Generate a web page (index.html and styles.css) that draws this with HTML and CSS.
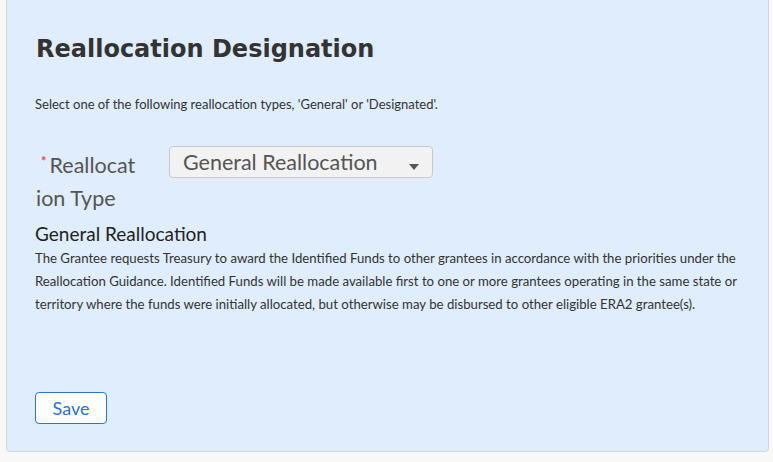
FILE: index.html
```html
<!DOCTYPE html>
<html lang="en">

<head>
    <meta charset="UTF-8">
    <meta name="viewport" content="width=device-width, initial-scale=1.0">
    <title>Reallocation Designation</title>
    <link rel="stylesheet" href="styles.css">
</head>

<body>
    <div class="panel">
        <h2>Reallocation Designation</h2>

        <p class="intro">Select one of the following reallocation types, 'General' or 'Designated'.</p>

        <div class="field">
            <label for="reallocType"><span class="req">*</span>Reallocation Type</label>
            <div class="select-box">
                <span class="select-value">General Reallocation</span>
                <span class="caret"></span>
            </div>
        </div>

        <div class="type-info">
            <h3>General Reallocation</h3>
            <p>The Grantee requests Treasury to award the Identified Funds to other grantees in accordance with the priorities under the Reallocation Guidance. Identified Funds will be made available first to one or more grantees operating in the same state or territory where the funds were initially allocated, but otherwise may be disbursed to other eligible ERA2 grantee(s).</p>
        </div>

        <button type="button" class="save-btn">Save</button>
    </div>
</body>

</html>
```

FILE: styles.css
```css
body {
    font-family: Lato, 'Noto Sans', sans-serif;
    background-color: #f8f8f6;
    margin: 0;
    color: #333;
}

.panel {
    background-color: #dfedfd;
    border: 1px solid #cfd6dd;
    border-radius: 4px;
    margin: -10px 4px 0 6px;
    padding: 10px 26px 27px 28px;
    height: 423px;
    display: flex;
    flex-direction: column;
}

h2 {
    font-family: 'DejaVu Sans', sans-serif;
    font-size: 24px;
    font-weight: bold;
    color: #333;
    margin: 33px 0 0 1px;
    line-height: 30px;
}

.intro {
    font-size: 13px;
    margin: 32px 0 0 0;
    line-height: 16px;
}

.field {
    display: flex;
    align-items: flex-start;
    margin-top: 34px;
}

label {
    width: 100px;
    font-size: 21.5px;
    line-height: 33px;
    color: #555;
    word-break: break-all;
    margin-right: 33px;
    margin-top: 3px;
    padding-left: 1px;
}

.req {
    color: #e0454f;
    font-size: 13px;
    font-weight: bold;
    vertical-align: 7px;
    margin: 0 3px 0 5px;
    line-height: 10px;
}

.select-box {
    width: 264px;
    height: 32px;
    box-sizing: border-box;
    border: 1px solid #c9c9c9;
    border-radius: 4px;
    background-color: #f2f2f2;
    display: flex;
    align-items: center;
    padding: 0 13px;
    color: #555;
    font-size: 21.5px;
}

.select-value {
    flex: 1;
    line-height: 28px;
}

.caret {
    width: 0;
    height: 0;
    border-left: 5px solid transparent;
    border-right: 5px solid transparent;
    border-top: 6px solid #555;
    margin-top: 9px;
}

.type-info h3 {
    font-size: 19px;
    font-weight: normal;
    color: #222;
    margin: 7px 0 0 0;
    line-height: 24px;
}

.type-info p {
    font-size: 13.2px;
    line-height: 23px;
    margin: 1px 0 0 0;
    color: #333;
}

.save-btn {
    margin-top: auto;
    align-self: flex-start;
    width: 72px;
    height: 32px;
    background-color: #fff;
    border: 1px solid #2a72cc;
    border-radius: 4px;
    color: #2a72cc;
    font-family: Lato, sans-serif;
    font-size: 18px;
    padding: 0;
    cursor: pointer;
}
```
